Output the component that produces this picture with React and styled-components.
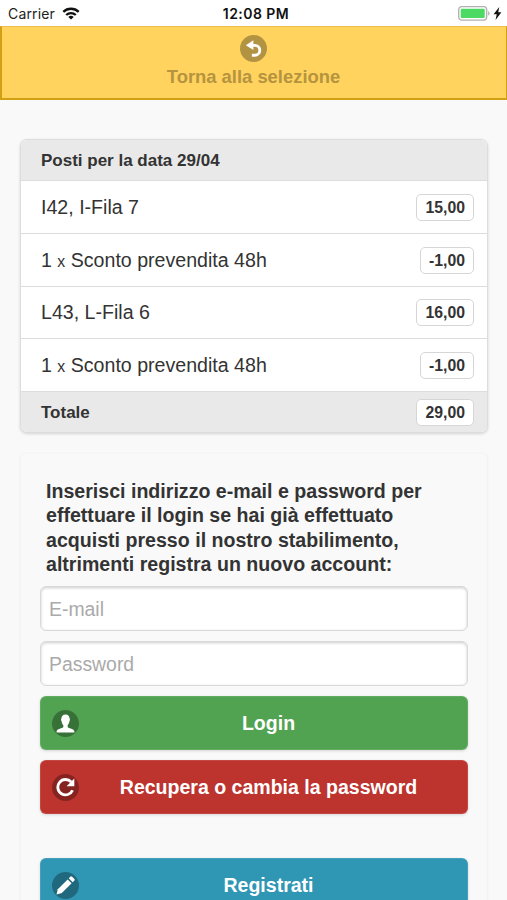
import React from 'react'
import styled, { createGlobalStyle } from 'styled-components'

const GlobalStyle = createGlobalStyle`
  * {
    box-sizing: border-box;
  }

  html,
  body {
    margin: 0;
    height: 100%;
    overflow: hidden;
    background: #f9f9f9;
  }

  body {
    font-family: 'Liberation Sans', Arial, sans-serif;
    color: #333;
  }
`

const Screen = styled.div`
  display: flex;
  flex-direction: column;
  height: 900px;
  overflow: hidden;
`

const StatusBar = styled.header`
  display: grid;
  grid-template-columns: 1fr auto 1fr;
  align-items: center;
  flex: none;
  height: 26px;
  padding: 0 5px 0 8px;
  background: #fff;
  font-family: Inter, 'Liberation Sans', sans-serif;
  font-size: 14px;
  color: #222;

  .carrier {
    display: flex;
    align-items: center;
    gap: 7px;
    padding-top: 1px;
    letter-spacing: 0.15px;
  }

  .time {
    font-weight: 600;
    font-size: 14px;
    letter-spacing: 0.45px;
    color: #111;
    padding: 1px 0 0 2px;
  }

  .power {
    display: flex;
    justify-content: flex-end;
    align-items: center;
    gap: 3px;
  }

  svg {
    display: block;
  }
`

const BackBanner = styled.button`
  display: flex;
  flex-direction: column;
  align-items: center;
  flex: none;
  height: 74px;
  margin: 0;
  padding: 8px 1px 0 0;
  border: 0 solid #d2a113;
  border-width: 1px 1px 2px 2px;
  border-top-color: #ecc047;
  background: #ffd35e;
  font-family: inherit;
  font-weight: 700;
  font-size: 18.4px;
  line-height: 22px;
  color: #b6943f;

  .label {
    margin-top: 4px;
  }
`

const IconDisc = styled.span`
  display: flex;
  align-items: center;
  justify-content: center;
  flex: none;
  width: 27px;
  height: 27px;
  border-radius: 50%;
  background: rgba(0, 0, 0, 0.3);
`

const Content = styled.main`
  display: flex;
  flex-direction: column;
  gap: 20px;
  padding: 39px 19px 0 20px;
`

const List = styled.section`
  border: 1px solid #ddd;
  border-radius: 7px;
  overflow: hidden;
  background: #fff;
  box-shadow: 0 1px 3px rgba(0, 0, 0, 0.15);
`

const Row = styled.div`
  display: flex;
  align-items: center;
  justify-content: space-between;
  height: 52.75px;
  padding: 1px 13px 0 20px;
  border-bottom: 1px solid #ddd;
  font-size: 19.6px;

  small {
    font-size: 15.8px;
  }
`

const Divider = styled(Row)`
  height: ${({ $last }) => ($last ? '40px' : '41px')};
  border-bottom-width: ${({ $last }) => ($last ? '0' : '1px')};
  background: #e9e9e9;
  font-weight: 700;
  font-size: 17px;
`

const Price = styled.span`
  padding: 0 8px;
  border: 1px solid #d6d6d6;
  border-radius: 5px;
  background: #fff;
  font-weight: 700;
  font-size: 15.8px;
  line-height: 25px;
`

const Panel = styled.form`
  display: flex;
  flex-direction: column;
  height: 480px;
  padding: 25px 19px 0;
  border: 1px solid #f3f3f3;
  border-top-color: #f7f7f7;
  border-radius: 5px;
  box-shadow: 0 0 2px rgba(0, 0, 0, 0.05);
`

const Intro = styled.p`
  margin: 0 0 10px;
  padding-left: 6px;
  font-weight: 700;
  font-size: 19.6px;
  line-height: 24.35px;
  white-space: nowrap;
`

const Field = styled.input`
  flex: none;
  width: 100%;
  height: 45px;
  margin: 0 0 10px;
  padding: 2px 8px 0;
  border: 1px solid #d9d9d9;
  border-radius: 6px;
  background: #fff;
  box-shadow: inset 0 1px 3px rgba(0, 0, 0, 0.2);
  font-family: inherit;
  font-size: 19.4px;
  color: #333;

  &::placeholder {
    color: #aaa;
    opacity: 1;
  }
`

const ActionButton = styled.button`
  display: grid;
  grid-template-columns: 27px 1fr;
  align-items: center;
  flex: none;
  width: 100%;
  height: 54px;
  margin: ${({ $separate }) => ($separate ? '34px' : '0')} 0 10px;
  padding: 0 9px 0 11px;
  border: 1px solid rgba(255, 255, 255, 0.1);
  border-radius: 6px;
  background: ${({ $color }) => $color};
  box-shadow: 0 1px 3px rgba(0, 0, 0, 0.15);
  font-family: inherit;
  font-weight: 700;
  font-size: 19.55px;
  color: #fff;
`

const BackIcon = () => (
  <svg width="19" height="19" viewBox="0 0 14 14">
    <path d="M1.4 4.6 6.9.9v7.2z" fill="#fff" />
    <path
      d="M5.8 4.7h2.2a3.65 3.65 0 0 1 0 7.3H5.8"
      fill="none"
      stroke="#fff"
      strokeWidth="2.1"
    />
  </svg>
)

const UserIcon = () => (
  <svg width="19" height="19" viewBox="0 0 14 14" fill="#fff">
    <path d="M7 .3C5 .3 4 1.5 4 3.400 3.600 3.800 3.600 4.800 4.100 5.300 4.300 6.600 4.800 7.600 5.400 8.200V9.500C5 10.600.4 10.500.4 13c0 .5.200.7.700.7h11.800c.500 0 .7-.2.7-.7 0-2.500-4.600-2.400-5-3.500V8.200C9.200 7.600 9.700 6.600 9.900 5.300 10.400 4.800 10.400 3.800 10 3.400 10 1.500 9 .3 7 .3z" />
  </svg>
)

const RefreshIcon = () => (
  <svg width="19" height="19" viewBox="0 0 14 14">
    <path
      d="M11.2 3A5.65 5.65 0 1 0 12.2 9"
      fill="none"
      stroke="#fff"
      strokeWidth="2.1"
    />
    <path d="M13.5.4v5.7H7.8z" fill="#fff" />
  </svg>
)

const PencilIcon = () => (
  <svg width="19" height="19" viewBox="0 0 14 14" fill="#fff">
    <path d="M8.6 2.5 11.5 5.4 4.3 12.6.4 13.6 1.3 9.7z" />
    <path d="M9.4 1.7 10.5.6a1 1 0 0 1 1.4 0l1.5 1.5a1 1 0 0 1 0 1.4L12.3 4.6z" />
  </svg>
)

const WifiIcon = () => (
  <svg width="18" height="13" viewBox="0 0 18 13">
    <g fill="none" stroke="#111" strokeWidth="2.3">
      <path d="M1.3 4.9a11 11 0 0 1 15.4 0" />
      <path d="M4.2 8a6.9 6.9 0 0 1 9.6 0" />
    </g>
    <path d="M9 12.6 6.3 10a3.9 3.9 0 0 1 5.4 0z" fill="#111" />
  </svg>
)

const BatteryIcon = () => (
  <svg width="32" height="15" viewBox="0 0 32 15">
    <rect x=".7" y=".7" width="28" height="13.4" rx="3" fill="#fff" stroke="#b0b0b0" strokeWidth="1.3" />
    <rect x="2.7" y="2.7" width="24" height="9.4" rx="1" fill="#4cd964" />
    <path d="M30.2 5v4.8c1.8-.8 1.8-4 0-4.8z" fill="#aaa" />
  </svg>
)

const BoltIcon = () => (
  <svg width="9" height="13" viewBox="0 0 8 12">
    <path d="M5.6 0 .4 6.7h2.9L2.2 12 7.6 4.9H4.7z" fill="#111" />
  </svg>
)

const seats = [
  { label: 'I42, I-Fila 7', price: '15,00' },
  { qty: 1, label: 'Sconto prevendita 48h', price: '-1,00' },
  { label: 'L43, L-Fila 6', price: '16,00' },
  { qty: 1, label: 'Sconto prevendita 48h', price: '-1,00' },
]

const Action = ({ icon, color, separate, children }) => {
  return (
    <ActionButton type="button" $color={color} $separate={separate}>
      <IconDisc>{icon}</IconDisc>
      <span>{children}</span>
    </ActionButton>
  )
}

export default function App() {
  return (
    <Screen>
      <GlobalStyle />
      <StatusBar>
        <div className="carrier">
          Carrier
          <WifiIcon />
        </div>
        <div className="time">12:08 PM</div>
        <div className="power">
          <BatteryIcon />
          <BoltIcon />
        </div>
      </StatusBar>
      <BackBanner type="button">
        <IconDisc>
          <BackIcon />
        </IconDisc>
        <span className="label">Torna alla selezione</span>
      </BackBanner>
      <Content>
        <List>
          <Divider>Posti per la data 29/04</Divider>
          {seats.map(({ qty, label, price }, i) => (
            <Row key={i}>
              <span>
                {qty && (
                  <>
                    {qty} <small>x</small>{' '}
                  </>
                )}
                {label}
              </span>
              <Price>{price}</Price>
            </Row>
          ))}
          <Divider $last>
            Totale
            <Price>29,00</Price>
          </Divider>
        </List>
        <Panel>
          <Intro>
            Inserisci indirizzo e-mail e password per
            <br />
            effettuare il login se hai già effettuato
            <br />
            acquisti presso il nostro stabilimento,
            <br />
            altrimenti registra un nuovo account:
          </Intro>
          <Field type="email" placeholder="E-mail" />
          <Field type="password" placeholder="Password" />
          <Action icon={<UserIcon />} color="#51a351">
            Login
          </Action>
          <Action icon={<RefreshIcon />} color="#bd332e">
            Recupera o cambia la password
          </Action>
          <Action icon={<PencilIcon />} color="#2f96b4" separate>
            Registrati
          </Action>
        </Panel>
      </Content>
    </Screen>
  )
}
